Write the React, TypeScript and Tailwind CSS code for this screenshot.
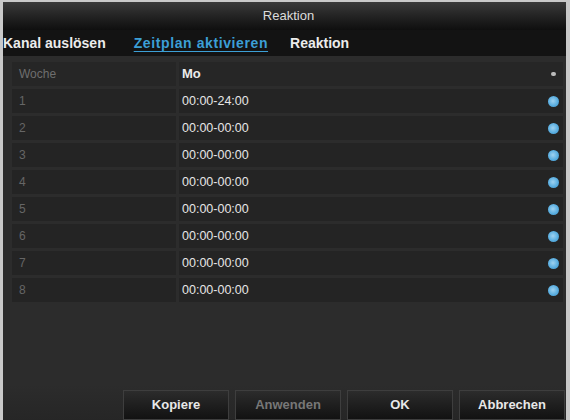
const rows = [
  { n: "1", t: "00:00-24:00" },
  { n: "2", t: "00:00-00:00" },
  { n: "3", t: "00:00-00:00" },
  { n: "4", t: "00:00-00:00" },
  { n: "5", t: "00:00-00:00" },
  { n: "6", t: "00:00-00:00" },
  { n: "7", t: "00:00-00:00" },
  { n: "8", t: "00:00-00:00" },
];

function Dot() {
  return (
    <span className="w-[11px] h-[11px] rounded-full bg-[radial-gradient(circle_at_45%_45%,#9fd2f0_0%,#5aaee0_55%,#3b8fc4_100%)]" />
  );
}

function Btn({ label, disabled }: { label: string; disabled?: boolean }) {
  return (
    <div
      className={
        "w-[106px] h-[30px] flex items-center justify-center border border-[#3e3e3e] bg-gradient-to-b from-[#2c2c2c] to-[#121212] text-[13px] font-bold " +
        (disabled ? "text-[#777]" : "text-[#e8e8e8]")
      }
    >
      {label}
    </div>
  );
}

export default function App() {
  return (
    <div
      className="w-[570px] h-[420px] overflow-hidden flex flex-col bg-[#2c2c2c] border-t-2 border-l-[3px] border-r-4 border-[#c9c9c9]"
      style={{ fontFamily: '"Liberation Sans", Arial, sans-serif' }}
    >
      <div className="h-[28px] shrink-0 flex items-center justify-center bg-gradient-to-b from-[#3a3a3a] to-[#0f0f0f] text-[13px] text-[#dcdcdc] pl-[8px]">
        Reaktion
      </div>
      <div className="h-[26px] shrink-0 flex items-center bg-[#131313] text-[14px] font-bold text-[#ececec]">
        <span>Kanal auslösen</span>
        <span className="ml-[28px] tracking-[0.6px] text-[#3c9fd6] underline underline-offset-[3px] decoration-[#3c9fd6]">
          Zeitplan aktivieren
        </span>
        <span className="ml-[22px]">Reaktion</span>
      </div>

      <div className="flex-1 flex flex-col pl-[9px] pr-[3px] pt-[6px] gap-[3px]">
        <div className="flex gap-[3px] h-[24px]">
          <div className="w-[164px] bg-[#262626] flex items-center pl-[7px] text-[12px] text-[#6e6e6e]">
            Woche
          </div>
          <div className="flex-1 bg-[#262626] flex items-center justify-between pl-[3px] pr-[7px]">
            <span className="text-[13px] font-bold text-[#ececec]">Mo</span>
            <span className="w-[5px] h-[4px] rounded-full bg-[#bbb]" />
          </div>
        </div>
        {rows.map((r) => (
          <div key={r.n} className="flex gap-[3px] h-[24px]">
            <div className="w-[164px] bg-[#242424] flex items-center pl-[7px] text-[12px] text-[#666]">
              {r.n}
            </div>
            <div className="flex-1 bg-[#242424] flex items-center justify-between pl-[3px] pr-[4px]">
              <span className="text-[12.5px] text-[#e6e6e6]">{r.t}</span>
              <Dot />
            </div>
          </div>
        ))}
      </div>

      <div className="h-[35px] shrink-0 flex items-end justify-end gap-[6px] pr-[1px] bg-gradient-to-b from-[#2c2c2c] to-[#262626]">
        <Btn label="Kopiere" />
        <Btn label="Anwenden" disabled />
        <Btn label="OK" />
        <Btn label="Abbrechen" />
      </div>
    </div>
  );
}
